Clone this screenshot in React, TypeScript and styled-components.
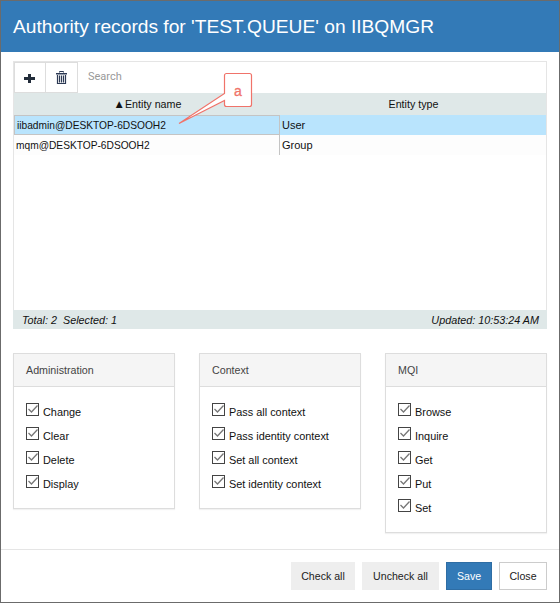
import React from 'react';
import styled, { createGlobalStyle } from 'styled-components';

const GlobalStyle = createGlobalStyle`
  html, body {
    margin: 0;
    padding: 0;
    background: #fff;
  }
  body {
    font-family: "Liberation Sans", Arial, sans-serif;
    font-size: 11px;
    color: #111;
  }
`;

const Dialog = styled.div`
  position: relative;
  box-sizing: border-box;
  width: 560px;
  height: 603px;
  display: flex;
  flex-direction: column;
  background: #fff;
  border: 1px solid #6b6b6b;
`;

const Header = styled.div`
  height: 51px;
  box-sizing: border-box;
  padding: 0 12px;
  display: flex;
  align-items: center;
  background: #337ab7;
  color: #fff;
  font-size: 19.2px;
`;

const Body = styled.div`
  flex: 1;
  padding: 9px 12px 0;
  display: flex;
  flex-direction: column;
`;

const Grid = styled.div`
  box-sizing: border-box;
  height: 268px;
  display: flex;
  flex-direction: column;
  border: 1px solid #e5e5e5;
  border-bottom: none;
`;

const Toolbar = styled.div`
  height: 31px;
  display: flex;
`;

const ToolButton = styled.button`
  box-sizing: border-box;
  width: 32px;
  height: 31px;
  padding: 0;
  display: flex;
  align-items: center;
  justify-content: center;
  background: #fff;
  border: 1px solid #ddd;
  border-left: none;
  &:first-child {
    border-left: 1px solid #ddd;
  }
`;

const Search = styled.div`
  padding: 8px 0 0 10px;
  color: #999;
  font-size: 11px;
  font-family: Roboto, "Liberation Sans", sans-serif;
`;

const ColumnHeader = styled.div`
  height: 22px;
  display: grid;
  grid-template-columns: 267px 1fr;
  background: #dfe8e8;
`;

const ColumnTitle = styled.div`
  display: flex;
  align-items: center;
  justify-content: center;
  font-size: 10.7px;
`;

const SortArrow = styled.span`
  font-size: 11.5px;
`;

const Rows = styled.div`
  flex: 1;
`;

const Row = styled.div<{ $selected?: boolean }>`
  height: 20px;
  display: grid;
  grid-template-columns: 266px 1fr;
  background: ${(p) => (p.$selected ? '#b9e4fd' : '#fdfdfd')};
`;

const NameCell = styled.div<{ $selected?: boolean }>`
  box-sizing: border-box;
  display: flex;
  align-items: center;
  padding-left: 2px;
  font-size: 10.2px;
  border-right: 1px solid #c4c4c4;
  ${(p) => p.$selected && 'border: 1px solid #c4c4c4;'}
`;

const TypeCell = styled.div`
  display: flex;
  align-items: center;
  padding-left: 2px;
`;

const StatusBar = styled.div`
  height: 19px;
  box-sizing: border-box;
  margin: 0 -1px;
  padding: 0 8px 0 9px;
  display: flex;
  align-items: center;
  justify-content: space-between;
  background: #dfe8e8;
  font-style: italic;
  font-size: 10.8px;
`;

const Panels = styled.div`
  margin-top: 24px;
  display: flex;
  align-items: flex-start;
  justify-content: space-between;
`;

const Panel = styled.div`
  box-sizing: border-box;
  width: 162px;
  border: 1px solid #ddd;
  box-shadow: 0 1px 1px rgba(0, 0, 0, 0.05);
`;

const PanelHeading = styled.div`
  height: 33px;
  box-sizing: border-box;
  padding-left: 12px;
  display: flex;
  align-items: center;
  background: #f5f5f5;
  border-bottom: 1px solid #ddd;
  color: #444;
  font-size: 10.7px;
`;

const PanelBody = styled.div`
  padding: 19px 12px 17px;
  display: flex;
  flex-direction: column;
  gap: 11px;
`;

const CheckRow = styled.label`
  height: 13px;
  display: flex;
  align-items: flex-end;
  gap: 4px;
  line-height: 13px;
  font-size: 10.9px;
`;

const Box = styled.span`
  width: 13px;
  height: 13px;
  flex: none;
  display: block;
  margin-bottom: 3px;
`;

const Footer = styled.div`
  height: 53px;
  box-sizing: border-box;
  padding: 12px 12px 0 0;
  display: flex;
  justify-content: flex-end;
  gap: 7px;
  border-top: 1px solid #e5e5e5;
`;

const FooterButton = styled.button<{ $variant?: 'muted' | 'primary' | 'plain'; $width: number }>`
  width: ${(p) => p.$width}px;
  height: 28px;
  box-sizing: border-box;
  padding: 0;
  font-family: inherit;
  font-size: 10.6px;
  border: 1px solid
    ${(p) => (p.$variant === 'primary' ? '#2e6da4' : p.$variant === 'plain' ? '#ccc' : '#eee')};
  background: ${(p) => (p.$variant === 'primary' ? '#337ab7' : p.$variant === 'plain' ? '#fff' : '#eee')};
  color: ${(p) => (p.$variant === 'primary' ? '#fff' : '#222')};
`;

const Callout = styled.svg`
  position: absolute;
  left: 169px;
  top: 70px;
  font-family: "Liberation Sans", Arial, sans-serif;
`;

const CheckIcon = () => (
  <Box>
    <svg width="13" height="13" viewBox="0 0 13 13">
      <rect x="0.5" y="0.5" width="12" height="12" fill="#fff" stroke="#444" />
      <path d="M2.5 6 L5.500 9 L11.500 2.500" fill="none" stroke="#777" strokeWidth="1.3" />
    </svg>
  </Box>
);

const PlusIcon = () => (
  <svg width="12" height="13" viewBox="0 0 12 13">
    <path d="M4 3h3v3h4v3H7v3H4V9H0V6h4z" fill="#222c3a" />
  </svg>
);

const TrashIcon = () => (
  <svg width="11" height="13" viewBox="0 0 11 13">
    <path d="M3.500 1.500V0.500h4v1" fill="none" stroke="#2d3a55" />
    <path d="M0 2h11v1.500H0z" fill="#2d3a55" />
    <path d="M1.500 4v8.500h8V4M3.500 4.500v7M5.500 4.500v7M7.500 4.500v7" fill="none" stroke="#2d3a55" strokeWidth="1.2" />
  </svg>
);

const permissionGroups = [
  { title: 'Administration', items: ['Change', 'Clear', 'Delete', 'Display'] },
  { title: 'Context', items: ['Pass all context', 'Pass identity context', 'Set all context', 'Set identity context'] },
  { title: 'MQI', items: ['Browse', 'Inquire', 'Get', 'Put', 'Set'] },
];

export default function App() {
  return (
    <>
      <GlobalStyle />
      <Dialog>
        <Header>Authority records for 'TEST.QUEUE' on IIBQMGR</Header>
        <Body>
          <Grid>
            <Toolbar>
              <ToolButton><PlusIcon /></ToolButton>
              <ToolButton><TrashIcon /></ToolButton>
              <Search>Search</Search>
            </Toolbar>
            <ColumnHeader>
              <ColumnTitle><SortArrow>▲</SortArrow>Entity name</ColumnTitle>
              <ColumnTitle>Entity type</ColumnTitle>
            </ColumnHeader>
            <Rows>
              <Row $selected>
                <NameCell $selected>iibadmin@DESKTOP-6DSOOH2</NameCell>
                <TypeCell>User</TypeCell>
              </Row>
              <Row>
                <NameCell>mqm@DESKTOP-6DSOOH2</NameCell>
                <TypeCell>Group</TypeCell>
              </Row>
            </Rows>
            <StatusBar>
              <span>Total: 2&nbsp; Selected: 1</span>
              <span>Updated: 10:53:24 AM</span>
            </StatusBar>
          </Grid>
          <Panels>
            {permissionGroups.map((group) => (
              <Panel key={group.title}>
                <PanelHeading>{group.title}</PanelHeading>
                <PanelBody>
                  {group.items.map((item) => (
                    <CheckRow key={item}>
                      <CheckIcon />
                      {item}
                    </CheckRow>
                  ))}
                </PanelBody>
              </Panel>
            ))}
          </Panels>
        </Body>
        <Footer>
          <FooterButton $width={64}>Check all</FooterButton>
          <FooterButton $width={77}>Uncheck all</FooterButton>
          <FooterButton $variant="primary" $width={46}>Save</FooterButton>
          <FooterButton $variant="plain" $width={48}>Close</FooterButton>
        </Footer>
        <Callout width="90" height="60" viewBox="0 0 90 60">
          <path
            d="M54.500 4.500a2 2 0 0 1 2-2h23a2 2 0 0 1 2 2v29a2 2 0 0 1-2 2h-23a2 2 0 0 1-2-2v-4L9 52.500l45.500-30z"
            fill="#fff"
            stroke="#f0736a"
            strokeWidth="1.2"
          />
          <text x="68" y="25" textAnchor="middle" fontSize="14" stroke="#f0736a" strokeWidth="0.3" fill="#f0736a">a</text>
        </Callout>
      </Dialog>
    </>
  );
}
